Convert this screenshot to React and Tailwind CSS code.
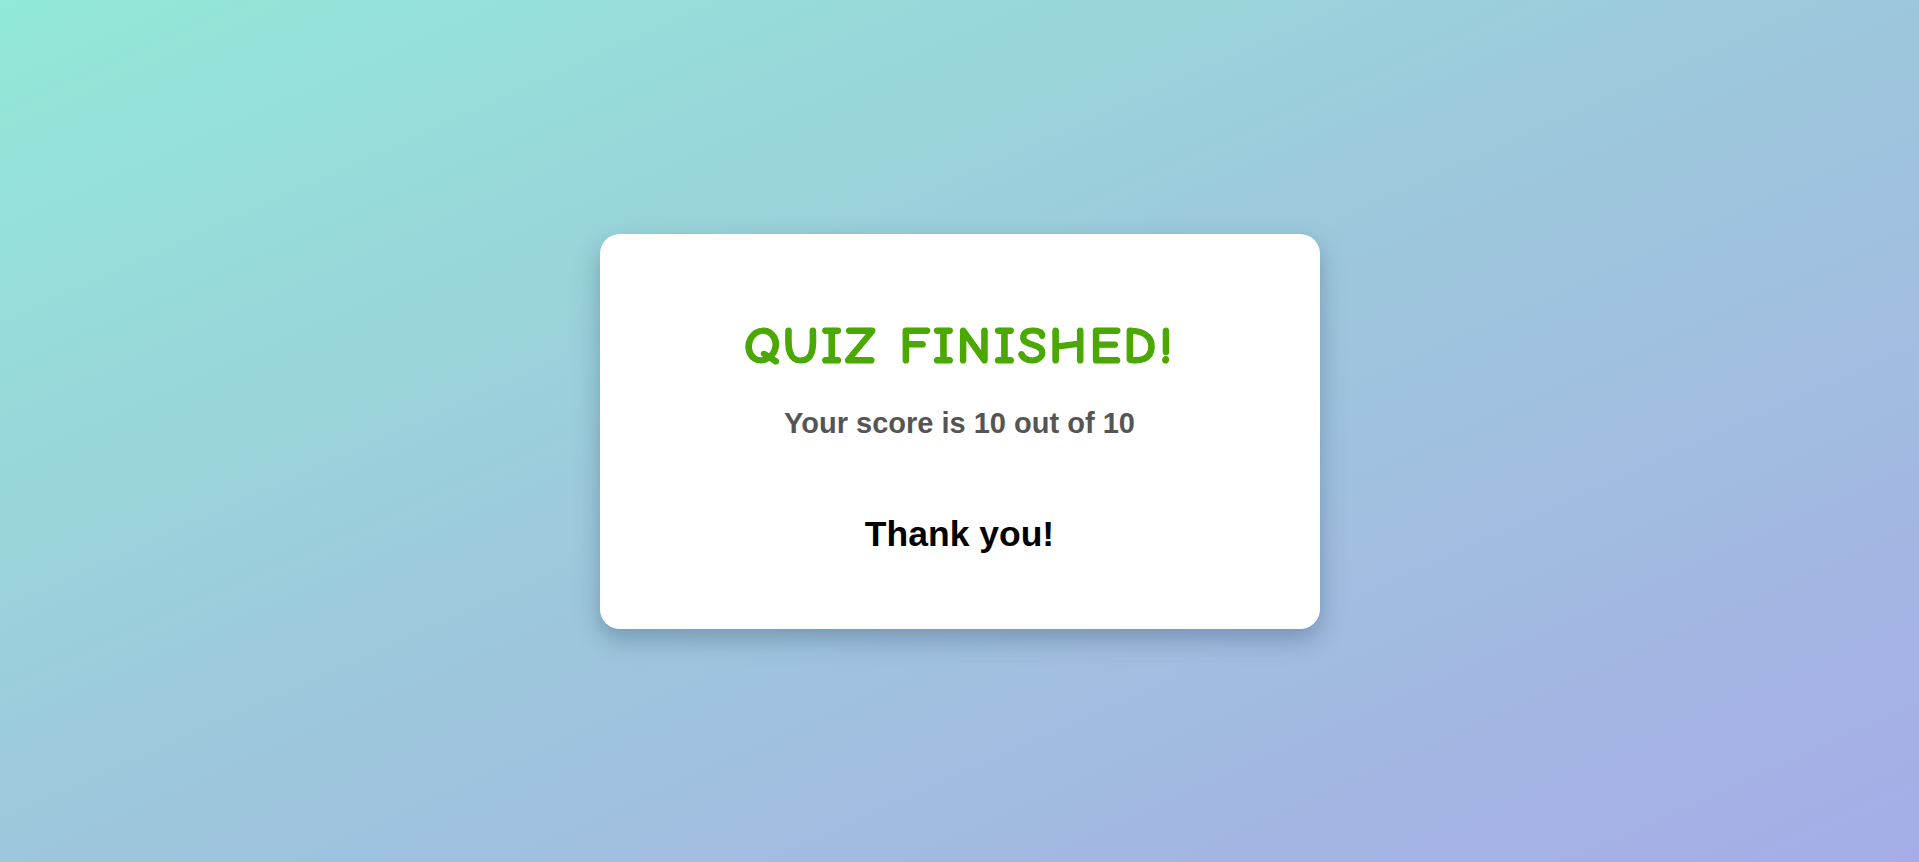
import React from "react";

export default function App() {
  const score = 10;
  const total = 10;

  return (
    <div className="min-h-screen w-full flex items-center justify-center bg-linear-to-br from-[#92e9d8] via-[#9dc7dc] to-[#a6ace7]">
      <div className="w-[720px] bg-white rounded-[20px] shadow-[0_10px_24px_rgba(40,70,100,0.35)] pt-[82px] pb-[73px] flex flex-col items-center text-center">
        <h1 className="text-[53px] leading-[60px] font-bold tracking-[2.5px] text-[#4aa800] [-webkit-text-stroke:1.2px_#4aa800] font-['Comic_Sans_MS','Comic_Neue','Open_Sans',cursive]">
          QUIZ FINISHED!
        </h1>
        <p className="mt-[29px] text-[29px] leading-[36px] font-bold text-[#555555] font-['Liberation_Sans',Arial,sans-serif]">
          Your score is {score} out of {total}
        </p>
        <h2 className="mt-[71px] text-[35.5px] leading-[44px] font-bold text-black font-['Liberation_Sans',Arial,sans-serif]">
          Thank you!
        </h2>
      </div>
    </div>
  );
}
